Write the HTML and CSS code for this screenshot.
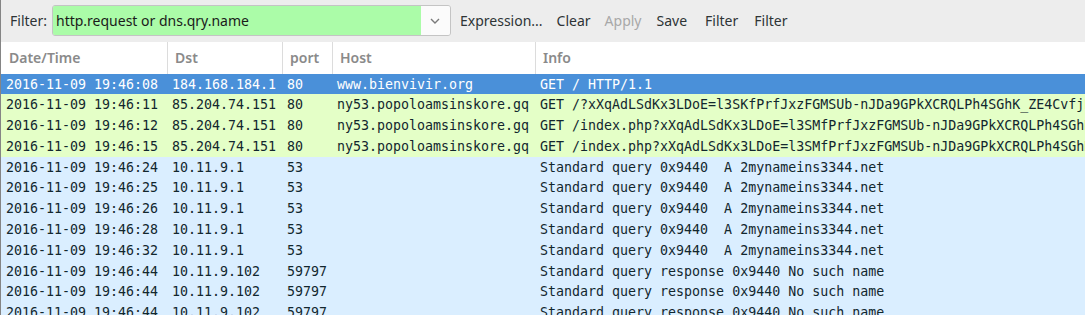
FILE: index.html
```html
<!DOCTYPE html>
<html lang="en">
<head>
    <meta charset="UTF-8">
    <title>Packet List</title>
    <link rel="stylesheet" href="styles.css">
</head>
<body>
    <div class="toolbar">
        <span class="filter-label">Filter:</span>
        <div class="filter-box">
            <div class="filter-input">http.request or dns.qry.name</div>
            <div class="filter-drop">
                <svg width="10" height="6" viewBox="0 0 10 6"><path d="M1 1 L5 5 L9 1" fill="none" stroke="#7a7a7a" stroke-width="1.4"/></svg>
            </div>
        </div>
        <span class="tool-btn">Expression...</span>
        <span class="tool-btn">Clear</span>
        <span class="tool-btn disabled">Apply</span>
        <span class="tool-btn save">Save</span>
        <span class="tool-btn">Filter</span>
        <span class="tool-btn last">Filter</span>
    </div>

    <div class="packet-list">
        <div class="row header">
            <div class="cell">Date/Time</div>
            <div class="cell">Dst</div>
            <div class="cell">port</div>
            <div class="cell">Host</div>
            <div class="cell">Info</div>
        </div>
        <div id="rows"></div>
    </div>

    <script>
        const packets = [
            ['2016-11-09 19:46:08', '184.168.184.1', '80', 'www.bienvivir.org', 'GET / HTTP/1.1', 'selected'],
            ['2016-11-09 19:46:11', '85.204.74.151', '80', 'ny53.popoloamsinskore.gq', 'GET /?xXqAdLSdKx3LDoE=l3SKfPrfJxzFGMSUb-nJDa9GPkXCRQLPh4SGhK_ZE4CvfjBrPRHt', 'http'],
            ['2016-11-09 19:46:12', '85.204.74.151', '80', 'ny53.popoloamsinskore.gq', 'GET /index.php?xXqAdLSdKx3LDoE=l3SMfPrfJxzFGMSUb-nJDa9GPkXCRQLPh4SGhK', 'http'],
            ['2016-11-09 19:46:15', '85.204.74.151', '80', 'ny53.popoloamsinskore.gq', 'GET /index.php?xXqAdLSdKx3LDoE=l3SMfPrfJxzFGMSUb-nJDa9GPkXCRQLPh4SGhK', 'http'],
            ['2016-11-09 19:46:24', '10.11.9.1', '53', '', 'Standard query 0x9440  A 2mynameins3344.net', 'udp'],
            ['2016-11-09 19:46:25', '10.11.9.1', '53', '', 'Standard query 0x9440  A 2mynameins3344.net', 'udp'],
            ['2016-11-09 19:46:26', '10.11.9.1', '53', '', 'Standard query 0x9440  A 2mynameins3344.net', 'udp'],
            ['2016-11-09 19:46:28', '10.11.9.1', '53', '', 'Standard query 0x9440  A 2mynameins3344.net', 'udp'],
            ['2016-11-09 19:46:32', '10.11.9.1', '53', '', 'Standard query 0x9440  A 2mynameins3344.net', 'udp'],
            ['2016-11-09 19:46:44', '10.11.9.102', '59797', '', 'Standard query response 0x9440 No such name', 'udp'],
            ['2016-11-09 19:46:44', '10.11.9.102', '59797', '', 'Standard query response 0x9440 No such name', 'udp'],
            ['2016-11-09 19:46:44', '10.11.9.102', '59797', '', 'Standard query response 0x9440 No such name', 'udp']
        ];

        const rowsElement = document.getElementById('rows');
        packets.forEach(p => {
            const row = document.createElement('div');
            row.className = 'row packet ' + p[5];
            for (let i = 0; i < 5; i++) {
                const cell = document.createElement('div');
                cell.className = 'cell';
                cell.textContent = p[i];
                row.appendChild(cell);
            }
            rowsElement.appendChild(row);
        });
    </script>
</body>
</html>
```

FILE: styles.css
```css
* {
    margin: 0;
    padding: 0;
    box-sizing: border-box;
}

body {
    font-family: 'Noto Sans', 'Open Sans', sans-serif;
    background: #fff;
    border-left: 1px solid #858585;
    height: 315px;
    overflow: hidden;
    color: #2e3436;
}

.toolbar {
    height: 42px;
    background: #ededed;
    display: flex;
    align-items: center;
    padding-left: 9px;
    padding-bottom: 1px;
    font-size: 14px;
}

.filter-label {
    margin-right: 5px;
}

.filter-box {
    width: 399px;
    height: 31px;
    display: flex;
    border: 1px solid #c4c4c4;
    border-radius: 3px;
    overflow: hidden;
    margin-right: 2px;
}

.filter-input {
    flex: 1;
    background: #abfca8;
    padding-left: 3px;
    line-height: 29px;
    color: #1a1a1a;
}

.filter-drop {
    width: 29px;
    background: #fbfbfb;
    display: flex;
    align-items: center;
    justify-content: center;
}

.tool-btn {
    padding: 0 7px;
}

.tool-btn.disabled {
    color: #a8a8a8;
    padding-right: 8px;
}

.tool-btn.save {
    padding-right: 11px;
}

.tool-btn.last {
    padding-left: 9px;
}

.packet-list {
    font-size: 13.3px;
}

.row {
    display: grid;
    grid-template-columns: 166px 115px 50px 203px 1fr;
    white-space: pre;
}

.row .cell {
    overflow: hidden;
}

.header {
    height: 31.5px;
    font-size: 14px;
    font-weight: 600;
    color: #8a8a8a;
}

.header .cell {
    line-height: 31.5px;
    padding-left: 7px;
    border-left: 1px solid #dcdcdc;
}

.header .cell:first-child {
    border-left: none;
    padding-left: 8px;
}

.packet {
    height: 20.8px;
    line-height: 21.4px;
    font-family: 'DejaVu Sans Mono', monospace;
    color: #12272e;
}

.packet .cell {
    padding-left: 5px;
}

.packet.selected {
    background: #4a90d9;
    color: #fff;
}

.packet.http {
    background: #e4ffc7;
}

.packet.udp {
    background: #daeeff;
}
```
